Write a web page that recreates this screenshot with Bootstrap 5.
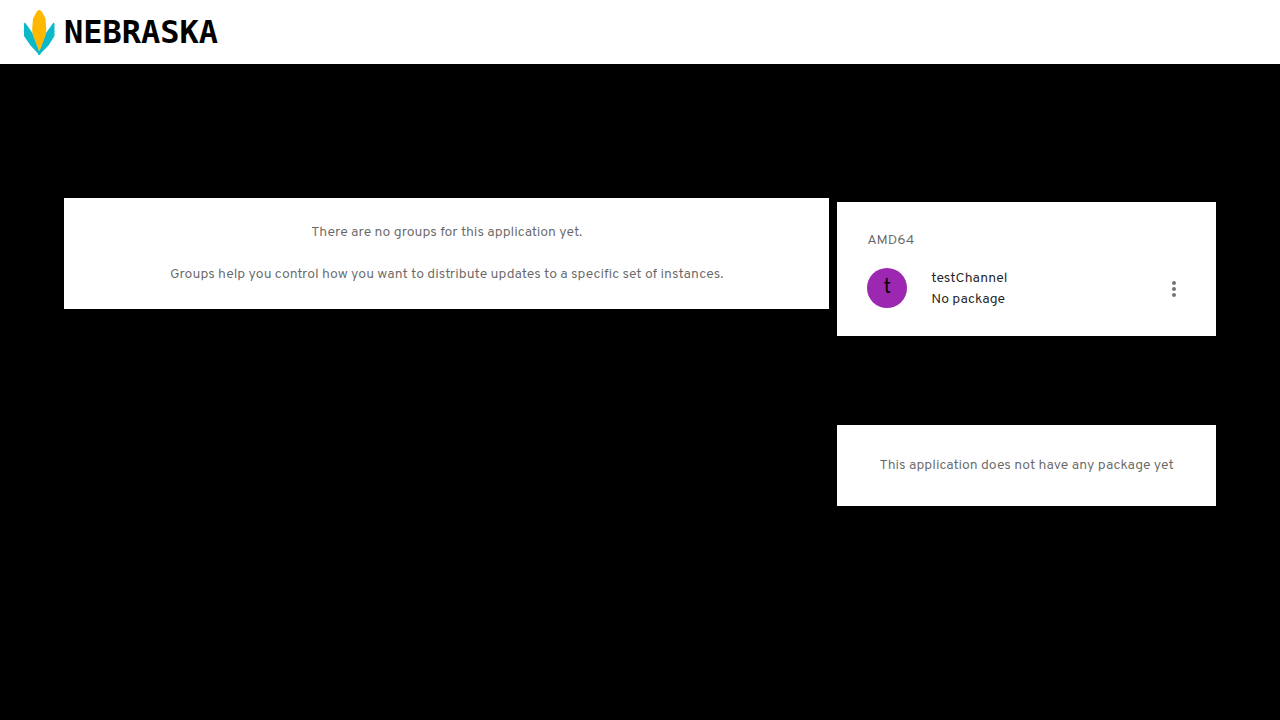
<!DOCTYPE html>
<html lang="en">
<head>
<meta charset="utf-8">
<meta name="viewport" content="width=device-width, initial-scale=1">
<title>Nebraska</title>
<link rel="stylesheet" href="https://cdn.jsdelivr.net/npm/bootstrap@5.3.0/dist/css/bootstrap.min.css">
<style>
  body { background: #000; color: rgba(0, 0, 0, .87); font-family: Overpass, Roboto, sans-serif; font-size: 14px; line-height: 21px; }
  .topbar { min-height: 64px; }
  .wordmark { font-family: "DejaVu Sans Mono", monospace; font-weight: 700; font-size: 32px; line-height: 40px; color: #000; }
  .page { padding: 134px 64px 64px; }
  .panel { background: #fff; }
  .muted { color: rgba(0, 0, 0, .6); }
  .groups-empty { padding: 24px; }
  .side { padding-top: 4px; }
  .channels { padding: 28px 30px 26px; margin-bottom: 89px; }
  .arch { font-size: 14px; line-height: 21px; margin-bottom: 17px; font-weight: 400; }
  .packages-empty { padding: 30px; }
  .avatar { width: 40px; height: 40px; background: #9c27b0; color: #000; font-size: 20px; line-height: 20px; }
  .more { color: rgba(0, 0, 0, .54); }
</style>
</head>
<body>
<header class="navbar topbar bg-white px-4 py-0">
  <a class="navbar-brand d-flex align-items-center p-0 m-0 gap-2" href="#" aria-label="Nebraska">
    <svg width="32" height="48" viewBox="0 0 32 48" aria-hidden="true">
      <path fill="#0cb9c9" d="M1 14.500 L8.500 25 L15.300 43 L22 25 L29.500 14.500 L30.500 15.500 V28 L24.500 37.500 L17 45 L16 47 H14.500 L13.500 45 L6.500 37.500 L0 28 V15.500Z"/>
      <path fill="#ffb800" d="M14.500 2 H16 L18 4 L21.500 10.500 L22.300 22 L21.800 26.500 L15.500 43 H15 L8.700 26.500 L8.100 22 L9 10.500 L12.500 4Z"/>
    </svg>
    <span class="wordmark">NEBRASKA</span>
  </a>
</header>

<main class="page">
  <div class="row gx-2 align-items-start">
    <section class="col-8">
      <div class="panel groups-empty muted text-center">
        There are no groups for this application yet.<br><br>
        Groups help you control how you want to distribute updates to a specific set of instances.
      </div>
    </section>
    <div class="col-4 side">
      <section class="panel channels">
        <h2 class="arch muted">AMD64</h2>
        <div class="d-flex align-items-center">
          <div class="avatar rounded-circle d-flex align-items-center justify-content-center align-self-start flex-shrink-0 me-4">t</div>
          <div class="flex-grow-1">
            <div>testChannel</div>
            <div>No package</div>
          </div>
          <button type="button" class="btn more border-0 p-0 d-flex" aria-label="Channel menu">
            <svg width="24" height="24" viewBox="0 0 24 24" fill="currentColor" aria-hidden="true">
              <path d="M12 8c1.100 0 2-.9 2-2s-.9-2-2-2-2 .9-2 2 .9 2 2 2zm0 2c-1.100 0-2 .9-2 2s.9 2 2 2 2-.9 2-2-.9-2-2-2zm0 6c-1.100 0-2 .9-2 2s.9 2 2 2 2-.9 2-2-.9-2-2-2z"/>
            </svg>
          </button>
        </div>
      </section>
      <section class="panel packages-empty muted text-center">This application does not have any package yet</section>
    </div>
  </div>
</main>
<script src="https://cdn.jsdelivr.net/npm/bootstrap@5.3.0/dist/js/bootstrap.bundle.min.js"></script>
</body>
</html>
